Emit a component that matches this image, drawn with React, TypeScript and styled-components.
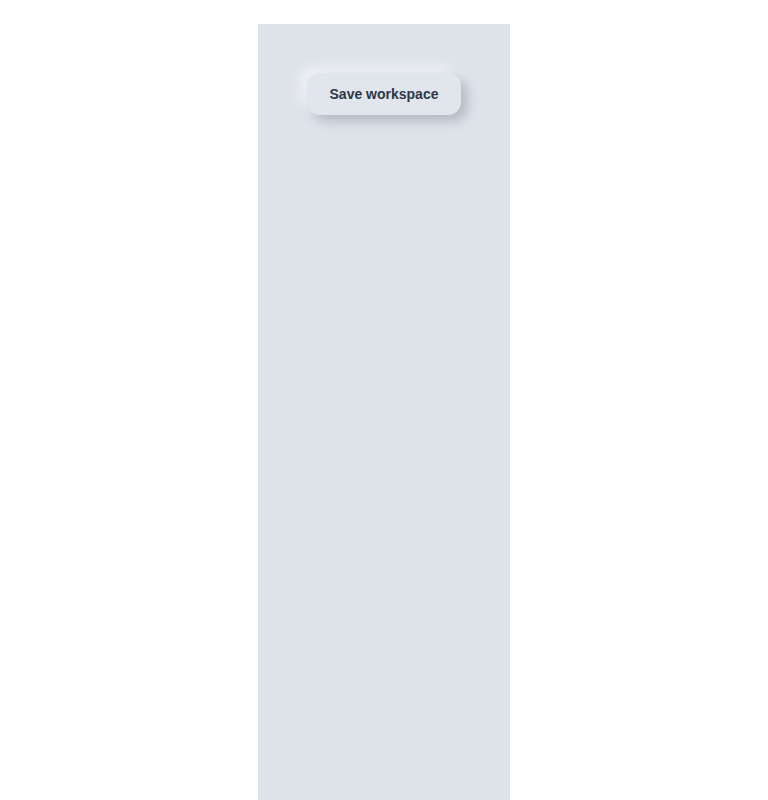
import React from 'react'
import styled, { createGlobalStyle } from 'styled-components'

const Global = createGlobalStyle`
  body {
    margin: 0;
    background: #fff;
    font-family: 'Liberation Sans', Arial, sans-serif;
  }
`

const Panel = styled.div`
  width: 252px;
  min-height: 776px;
  margin: 24px auto 0;
  padding-top: 49px;
  box-sizing: border-box;
  background: #dee3ea;
  display: flex;
  flex-direction: column;
  align-items: center;
`

const SaveButton = styled.button`
  font-family: 'Liberation Sans', Arial, sans-serif;
  font-size: 14px;
  font-weight: 700;
  line-height: 18px;
  color: #2d3748;
  background: #e1e6ed;
  border: none;
  border-radius: 13px;
  padding: 12px 23px;
  cursor: pointer;
  box-shadow: 6px 6px 12px #b3b9c2, -6px -6px 12px #f0f2f6;
`

const App: React.FC = () => {
  return (
    <>
      <Global />
      <Panel>
        <SaveButton>Save workspace</SaveButton>
      </Panel>
    </>
  )
}

export default App
